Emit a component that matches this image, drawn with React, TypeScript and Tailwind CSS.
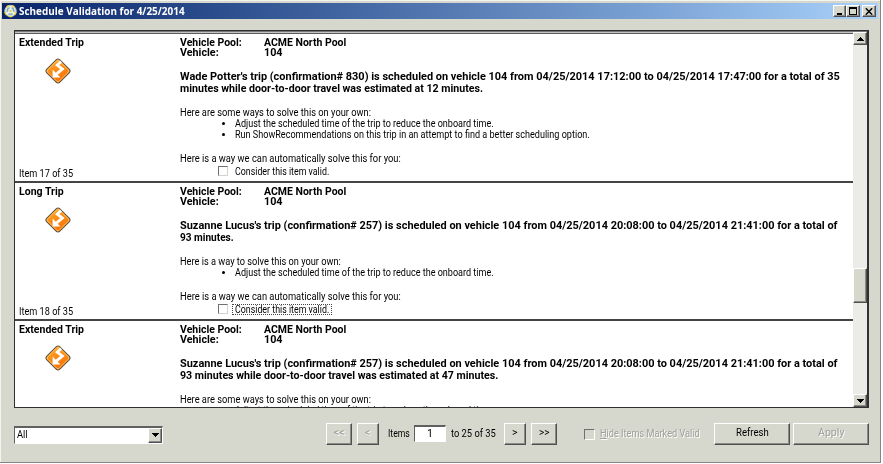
import React, { useLayoutEffect, useRef, useState } from "react";

type Line = { text: string; width: number };

type Item = {
  title: Line;
  index: number;
  height: string;
  message: Line[];
  intro: Line;
  tips: Line[];
  focused?: boolean;
  partial?: boolean;
};

const adjustTip: Line = { text: "Adjust the scheduled time of the trip to reduce the onboard time.", width: 259 };
const runTip: Line = { text: "Run ShowRecommendations on this trip in an attempt to find a better scheduling option.", width: 355 };

const items: Item[] = [
  {
    title: { text: "Extended Trip", width: 65 },
    index: 17,
    height: "h-[149px]",
    message: [
      { text: "Wade Potter's trip (confirmation# 830) is scheduled on vehicle 104 from 04/25/2014 17:12:00 to 04/25/2014 17:47:00 for a total of 35", width: 660 },
      { text: "minutes while door-to-door travel was estimated at 12 minutes.", width: 303 },
    ],
    intro: { text: "Here are some ways to solve this on your own:", width: 191 },
    tips: [adjustTip, runTip],
  },
  {
    title: { text: "Long Trip", width: 45 },
    index: 18,
    height: "h-[138px]",
    message: [
      { text: "Suzanne Lucus's trip (confirmation# 257) is scheduled on vehicle 104 from 04/25/2014 20:08:00 to 04/25/2014 21:41:00 for a total of", width: 658 },
      { text: "93 minutes.", width: 54 },
    ],
    intro: { text: "Here is a way to solve this on your own:", width: 161 },
    tips: [adjustTip],
    focused: true,
  },
  {
    title: { text: "Extended Trip", width: 65 },
    index: 19,
    height: "h-[149px]",
    message: [
      { text: "Suzanne Lucus's trip (confirmation# 257) is scheduled on vehicle 104 from 04/25/2014 20:08:00 to 04/25/2014 21:41:00 for a total of", width: 658 },
      { text: "93 minutes while door-to-door travel was estimated at 47 minutes.", width: 318 },
    ],
    intro: { text: "Here are some ways to solve this on your own:", width: 191 },
    tips: [adjustTip],
    partial: true,
  },
];

const raised =
  "border border-t-white border-l-white border-r-[#505050] border-b-[#505050] shadow-[inset_-1px_-1px_0_#8a8a86] bg-[#d6d8ce]";

/* Condenses a single line of text to a given width. */
function Fit({ width, children }: { width: number; children: React.ReactNode }) {
  const ref = useRef<HTMLSpanElement>(null);
  const [scale, setScale] = useState(1);
  useLayoutEffect(() => {
    if (ref.current) setScale(width / ref.current.offsetWidth);
  }, [width]);
  return (
    <span className="block shrink-0 whitespace-nowrap text-left" style={{ width }}>
      <span ref={ref} className="inline-block origin-left" style={{ transform: `scaleX(${scale})` }}>
        {children}
      </span>
    </span>
  );
}

function TripSign() {
  return (
    <svg className="ml-[25px] mt-[9px] block" width="28" height="28" viewBox="0 0 28 28">
      <defs>
        <linearGradient id="sign" x1="0" y1="0" x2="1" y2="0.4">
          <stop offset="0" stopColor="#ffab2e" />
          <stop offset="0.5" stopColor="#fb8c14" />
          <stop offset="1" stopColor="#f8780c" />
        </linearGradient>
      </defs>
      <rect x="4.8" y="4.8" width="18.4" height="18.4" rx="2.6" transform="rotate(45 14 14)" fill="url(#sign)" stroke="#5b5148" strokeWidth="1" />
      <rect x="5.9" y="5.9" width="16.2" height="16.2" rx="1.6" transform="rotate(45 14 14)" fill="none" stroke="#ffc45a" strokeWidth="0.9" />
      <path d="M17 4.4L13.2 8.2L18.4 12L12 17.4" fill="none" stroke="#fff" strokeWidth="2.8" />
      <path d="M8.6 12.6V20.4H16.4Z" fill="#fff" />
    </svg>
  );
}

function ItemRow({ item }: { item: Item }) {
  return (
    <section className={`flex shrink-0 border-b-2 border-[#454545] ${item.height}`}>
      <div className="flex w-[165px] shrink-0 flex-col pl-1 pt-[4px]">
        <h2 className="h-[10px] font-bold leading-[10px]"><Fit width={item.title.width}>{item.title.text}</Fit></h2>
        <TripSign />
        {!item.partial && <div className="mt-auto mb-[1px] h-3 leading-3"><Fit width={54}>Item {item.index} of 35</Fit></div>}
      </div>
      <div className="min-w-0 flex-1 whitespace-nowrap pt-[4px]">
        <dl className="grid grid-cols-[84px_1fr] font-bold leading-[10px]">
          <dt className="h-[10px]"><Fit width={62}>Vehicle Pool:</Fit></dt>
          <dd className="h-[10px]"><Fit width={82}>ACME North Pool</Fit></dd>
          <dt className="h-[10px]"><Fit width={39}>Vehicle:</Fit></dt>
          <dd className="h-[10px]"><Fit width={18.6}>104</Fit></dd>
        </dl>
        <div className="mt-[13px] font-bold leading-3">
          {item.message.map((m) => (
            <div key={m.text} className="h-3"><Fit width={m.width}>{m.text}</Fit></div>
          ))}
        </div>
        <div className="mt-3 h-[11px] leading-3"><Fit width={item.intro.width}>{item.intro.text}</Fit></div>
        <ul>
          {item.tips.map((t) => (
            <li key={t.text} className="flex h-[11px] items-center pl-[42px] leading-[11px]">
              <span className="mr-[10px] size-[3px] rounded-full bg-black" />
              <Fit width={t.width}>{t.text}</Fit>
            </li>
          ))}
        </ul>
        {!item.partial && (
          <>
            <div className="mt-[13px] h-3 leading-3"><Fit width={221}>Here is a way we can automatically solve this for you:</Fit></div>
            <label className="flex h-3 items-center pl-[38px] leading-3">
              <span className="size-[10px] border border-b-[#d6d2ca] border-l-[#707070] border-r-[#d6d2ca] border-t-[#707070]" />
              <span className={`ml-[4px] h-[11px] border px-[2px] leading-[9px] ${item.focused ? "border-dotted border-[#444]" : "border-transparent"}`}>
                <Fit width={94}>Consider this item valid.</Fit>
              </span>
            </label>
          </>
        )}
      </div>
    </section>
  );
}

function Caret({ up }: { up?: boolean }) {
  return (
    <svg width="7" height="4" viewBox="0 0 7 4" shapeRendering="crispEdges">
      <path d={up ? "M0 4 L3.5 0 L7 4Z" : "M0 0 L7 0 L3.5 4Z"} fill="#000" />
    </svg>
  );
}

function AppIcon() {
  return (
    <svg width="13" height="14" viewBox="0 0 13 14">
      <circle cx="6.5" cy="7" r="5.7" fill="#dbe6de" stroke="#b9cdb8" strokeWidth="1" />
      <path d="M2.6 3.2A5.4 5.4 0 0 1 5 1.8M8 1.8A5.4 5.4 0 0 1 10.4 3.2M12 8A5.4 5.4 0 0 1 10.4 11M1 8A5.4 5.4 0 0 0 2.6 11M5.2 12.4H7.8" stroke="#f2d22e" strokeWidth="1.5" fill="none" />
      <circle cx="6.5" cy="7" r="3.5" fill="#c9dce6" stroke="#5d92b8" strokeWidth="0.9" />
      <path d="M6.5 7V2.5M6.5 7L2.6 9.8M6.5 7L10.4 9.8" stroke="#f5f7ee" strokeWidth="1.8" />
      <circle cx="6.5" cy="7" r="1.2" fill="#ecd040" />
    </svg>
  );
}

export default function App() {
  return (
    <div className="h-[464px] w-[883px] overflow-hidden bg-white font-['Roboto','Liberation_Sans',sans-serif] text-[11px] text-black">
      <main className="flex h-[463px] w-[881px] flex-col border-b border-r border-[#858585] bg-[#d6d8ce] pl-[2px] pt-[3px] shadow-[inset_1px_1px_0_#f4f4f0]">
        <header className="flex h-4 w-[876px] shrink-0 items-center bg-linear-to-r from-[#0a246a] to-[#aad2fb] px-[2px]">
          <AppIcon />
          <h1 className="ml-[2px] font-['Open_Sans',sans-serif] text-[11px] font-bold leading-4 text-white">
            <Fit width={166}>Schedule Validation for 4/25/2014</Fit>
          </h1>
          <div className="ml-auto flex h-3">
            <button className={`flex h-3 w-[13px] items-end pb-[1px] pl-[3px] ${raised}`}><span className="h-[2px] w-[5px] bg-black" /></button>
            <button className={`flex h-3 w-[14px] items-center justify-center ${raised}`}><span className="h-2 w-2 border border-t-2 border-black" /></button>
            <button className={`ml-[2px] flex h-3 w-[14px] items-center justify-center ${raised}`}>
              <svg width="8" height="7" viewBox="0 0 8 7"><path d="M0.8 0.3L7.2 6.7M7.2 0.3L0.8 6.7" stroke="#000" strokeWidth="1.5" /></svg>
            </button>
          </div>
        </header>

        <div className="ml-[12px] mt-[11px] flex h-[378px] w-[855px] shrink-0 border border-r-2 border-[#303030]">
          <div className="flex min-w-0 flex-1 flex-col overflow-hidden border-t border-[#777] bg-white">
            <div className="h-[2px] shrink-0 border-b border-[#5a5a5a] bg-[#c4c4c4]" />
            {items.map((it) => <ItemRow key={it.index} item={it} />)}
          </div>
          <aside className="flex w-[14px] shrink-0 flex-col border-t border-[#777] bg-[#ebece7]">
            <div className={`flex h-[13px] items-center justify-center ${raised}`}><Caret up /></div>
            <div className={`mt-[223px] h-[35px] ${raised}`} />
            <div className={`mt-auto flex h-[13px] items-center justify-center ${raised}`}><Caret /></div>
          </aside>
        </div>

        <footer className="ml-[12px] mt-[14px] flex h-[23px] w-[855px] shrink-0 items-center">
          <div className="mt-[2px] flex h-[18px] w-[149px] items-center border border-t-2 border-b-white border-l-[#606060] border-r-white border-t-[#606060] bg-white">
            <div className="flex-1 pl-[2px]"><Fit width={11}>All</Fit></div>
            <div className={`flex h-[15px] w-[14px] items-center justify-center ${raised}`}><Caret /></div>
          </div>
          <button className={`ml-[163px] flex h-[22px] w-[26px] shrink-0 items-center justify-center text-[#a0a09a] [text-shadow:1px_1px_0_#fff] ${raised}`}><Fit width={11}>&lt;&lt;</Fit></button>
          <button className={`ml-[5px] flex h-[22px] w-[22px] shrink-0 items-center justify-center text-[#a0a09a] [text-shadow:1px_1px_0_#fff] ${raised}`}><Fit width={5.8}>&lt;</Fit></button>
          <div className="ml-[9px] w-[26px] shrink-0 pt-[2px]"><Fit width={22}>Items</Fit></div>
          <div className="flex h-[17px] w-[32px] shrink-0 justify-center border border-t-2 border-b-white border-l-[#606060] border-r-white border-t-[#606060] bg-white leading-[14px]"><Fit width={5.8}>1</Fit></div>
          <div className="ml-[5px] w-[53px] shrink-0 pt-[2px]"><Fit width={45}>to 25 of 35</Fit></div>
          <button className={`flex h-[22px] w-[22px] shrink-0 items-center justify-center ${raised}`}><Fit width={5.8}>&gt;</Fit></button>
          <button className={`ml-[5px] flex h-[22px] w-[26px] shrink-0 items-center justify-center ${raised}`}><Fit width={11}>&gt;&gt;</Fit></button>
          <label className="ml-[27px] flex items-center pt-[2px] text-[#a0a09a] [text-shadow:1px_1px_0_#fff]">
            <span className="mr-[5px] size-[11px] border border-b-white border-l-[#707070] border-r-white border-t-[#707070]" />
            <Fit width={100}><span className="underline">H</span>ide Items Marked Valid</Fit>
          </label>
          <button className={`ml-auto flex h-[22px] w-[76px] shrink-0 items-center justify-center ${raised}`}><Fit width={33}>Refresh</Fit></button>
          <button className={`ml-[3px] flex h-[22px] w-[76px] shrink-0 items-center justify-center text-[#a0a09a] [text-shadow:1px_1px_0_#fff] ${raised}`}><Fit width={26}>Apply</Fit></button>
        </footer>
      </main>
    </div>
  );
}
